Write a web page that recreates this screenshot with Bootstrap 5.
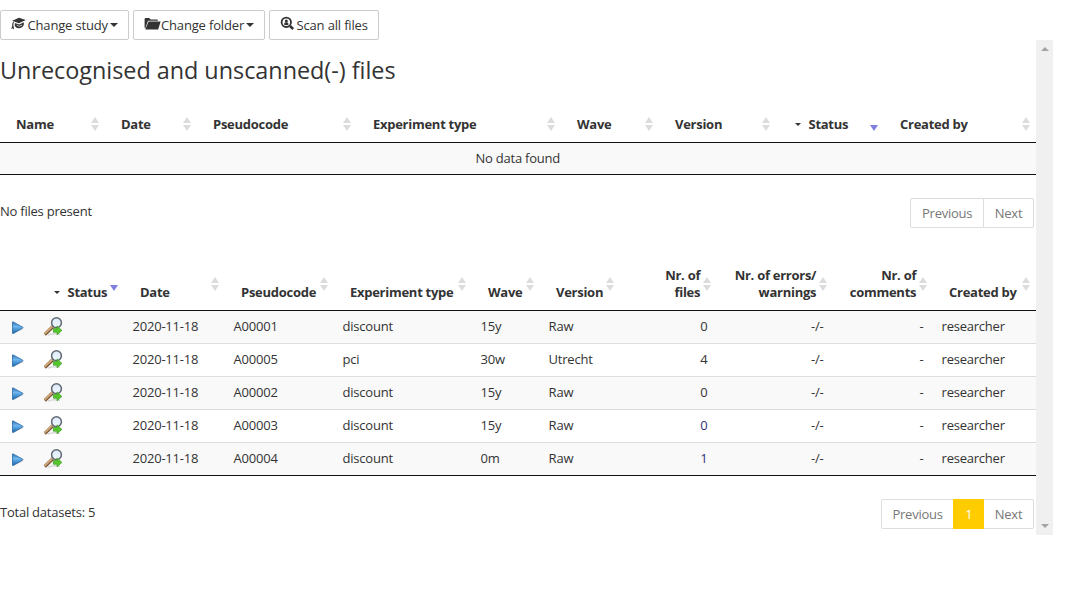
<!DOCTYPE html>
<html lang="en">
<head>
<meta charset="utf-8">
<title>Datasets</title>
<link href="https://cdn.jsdelivr.net/npm/bootstrap@5.3.0/dist/css/bootstrap.min.css" rel="stylesheet">
<style>
body{font:13px/17px "Open Sans",sans-serif;letter-spacing:-.23px;color:#333;background:#fff;overflow:hidden}
.toolbar{padding-top:10px;gap:4px;height:40px}
.tool{--bs-btn-color:#333;--bs-btn-border-color:#ccc;--bs-btn-hover-bg:#eee;border-radius:2px;font-size:13px;line-height:18px;height:30px;padding:0 10px;white-space:nowrap;letter-spacing:-.16px}
.tool svg{flex:none}
.tool .dropcaret{margin-left:2px}
.dropcaret{display:inline-block;flex:none;border:4px solid transparent;border-top-color:currentColor;border-bottom:0}
.pane{width:1053px;height:495px}
.pane-body{width:1036px}
h1{font-size:23.4px;font-weight:400;line-height:26px;margin:17px 0 23px;letter-spacing:-.02px}
.grid-table{table-layout:fixed;width:1036px;border-collapse:separate;border-spacing:0;border-bottom:1px solid #111}
.grid-table th{position:relative;vertical-align:bottom;padding:10px 16px 9px;border-bottom:1px solid #111;font-weight:700;white-space:nowrap;letter-spacing:-.27px}
.grid-table td{padding:7px 9px 7px 8.6px;height:33px;border-top:1px solid #ddd;white-space:nowrap}
.grid-table tbody tr:first-child td{border-top:0;height:31px}
.grid-table.datasets td{padding-top:6px;padding-bottom:8px}
.grid-table.datasets td.text-end{padding-right:9.6px}
.grid-table.datasets th.text-end{padding-right:16.8px}
.grid-table.datasets tbody tr:first-child td{height:32px}
.grid-table tbody tr:nth-child(odd) td{background:#f9f9f9}
.sort::before,.sort::after{content:"";position:absolute;right:6px;border:4px solid transparent}
.sort::before{bottom:19px;border-top:0;border-bottom:6px solid #dcdcdc}
.sort::after{bottom:11px;border-bottom:0;border-top:6px solid #dcdcdc}
.sort.active::before{display:none}
.sort.active::after{border-top-color:#7f7fe0}
.status-caret{border-width:3px;border-bottom:0;margin-right:7.5px;vertical-align:3px}
.datasets .sort::before{bottom:27px}
.datasets .sort::after{bottom:19px}
.datasets td svg{display:block;margin:-2px 0 -2px 1px}
.datasets td svg.play-icon{margin:2px 0 -2px 2px}
.pager{--bs-pagination-font-size:13px;--bs-pagination-color:#777;--bs-pagination-border-color:#ddd;--bs-pagination-padding-x:10.7px;--bs-pagination-padding-y:5px;--bs-pagination-border-radius:2px;--bs-pagination-active-bg:#fc0;--bs-pagination-active-border-color:#fc0;margin:0 2px 0 0}
.pager .page-link{line-height:18px;height:30px}
.scrollbar{width:17px;background:#f0f0f0;padding:7px 0}
.scrollbar span{border:4px solid transparent}
.arrow-up{border-top:0!important;border-bottom-color:#a3a3a3!important}
.arrow-down{border-bottom:0!important;border-top-color:#a3a3a3!important}
.grid-table .link-count{color:#337}
</style>
</head>
<body>
<svg width="0" height="0" class="position-absolute" aria-hidden="true">
<defs>
<linearGradient id="blue" x1="0" y1="0" x2="0" y2="1"><stop offset="0" stop-color="#2f72b5"/><stop offset=".4" stop-color="#6db7ee"/><stop offset="1" stop-color="#1667b1"/></linearGradient>
<linearGradient id="lens" x1="0" y1="0" x2="0" y2="1"><stop offset="0" stop-color="#dceafb"/><stop offset="1" stop-color="#f1f8ff"/></linearGradient>
</defs>
<symbol id="play" viewBox="0 0 12 14"><path d="M1.5 2.2v10.8l10.2-5.2z" fill="#999" opacity=".5"/><path d="M.5 1.2Q.5.6 1.1.9L10.6 6.1q.6.5 0 .9L1.1 12.5q-.6.3-.6-.4z" fill="url(#blue)" stroke="#2a68a5" stroke-width=".8"/></symbol>
<symbol id="scan" viewBox="0 0 19 19"><path d="M4 18.2q5-2.4 12-.8" stroke="#bbb" stroke-width="1.4" fill="none" opacity=".6"/><path d="M.7 17.6L8.8 9.8" stroke="#755434" stroke-width="3.4"/><path d="M.6 16.9L8.3 9.5" stroke="#d1a779" stroke-width="2"/><circle cx="12.5" cy="5.7" r="4.9" fill="url(#lens)" stroke="#606972" stroke-width="1.5"/><path d="M9.4 11.6h3.7V8.9l4.8 4.5-4.8 4.4v-2.6H9.4z" fill="#55c72d" stroke="#379c1e" stroke-width=".7"/></symbol>
</svg>

<div class="toolbar d-flex">
<button class="btn tool d-flex align-items-center" type="button" style="width:129px"><svg width="16" height="14" viewBox="0 0 16 14" fill="#333" style="margin:-2px .5px 0 0"><path d="M1.2 3.8L8 .7 14.8 3 7.9 6.3z"/><path d="M3.8 6v3q1.6 2.4 4.4 2.2Q11.6 11 12.8 7.8V5.2L8.2 7.6zm1.5 1.5 2.8 1.4 3.4-1.5q-1 2-3.3 2-1.9 0-2.9-1.9z" fill-rule="evenodd"/><path d="M2.3 4.3Q.8 7 1.3 8.7L.2 12l1.5-.7 1.4 1.1L2.5 8.8Q1.7 7.5 3 5z"/></svg>Change study<span class="dropcaret"></span></button>
<button class="btn tool d-flex align-items-center" type="button" style="width:132px"><svg width="17" height="14" viewBox="0 0 17 14" fill="#333" style="margin-top:-2px"><path d="M.6 11V2.2Q.6 1 1.8 1h3.4l1.5 1.4h6.1q1.2 0 1.2 1.4H4L1.4 11z"/><path d="M4.6 4.6h12L14.2 12.6H1.2z"/></svg>Change folder<span class="dropcaret"></span></button>
<button class="btn tool d-flex align-items-center" type="button" style="width:110px"><svg width="16" height="16" viewBox="0 0 16 16" style="margin:-3px .5px 0 0"><circle cx="6.3" cy="6.3" r="4.7" fill="none" stroke="#333" stroke-width="1.8"/><path d="M10 10l3.2 3" stroke="#333" stroke-width="2.5"/><circle cx="6.3" cy="5" r="1.5" fill="#333"/><path d="M4.3 7q2-1.5 4 0v1.9h-4z" fill="#333"/></svg>Scan all files</button>
</div>

<main class="pane d-flex">
<div class="pane-body">
<h1>Unrecognised and unscanned(-) files</h1>
<table class="grid-table">
<colgroup><col style="width:105px"><col style="width:92px"><col style="width:160px"><col style="width:204px"><col style="width:98px"><col style="width:117px"><col style="width:108px"><col style="width:152px"></colgroup>
<thead><tr><th class="sort">Name</th><th class="sort">Date</th><th class="sort">Pseudocode</th><th class="sort">Experiment type</th><th class="sort">Wave</th><th class="sort">Version</th><th class="sort active" style="padding-left:19px"><span class="dropcaret status-caret"></span>Status</th><th class="sort">Created by</th></tr></thead>
<tbody><tr><td colspan="8" class="text-center">No data found</td></tr></tbody>
</table>
<div class="d-flex justify-content-between" style="margin-top:23px"><div style="padding-top:5px">No files present</div>
<ul class="pagination pager"><li class="page-item"><a class="page-link" href="#">Previous</a></li><li class="page-item"><a class="page-link" href="#">Next</a></li></ul></div>

<table class="grid-table datasets" style="margin-top:29px">
<colgroup><col style="width:34px"><col style="width:90px"><col style="width:101px"><col style="width:109px"><col style="width:138px"><col style="width:68px"><col style="width:80px"><col style="width:97px"><col style="width:116px"><col style="width:100px"><col style="width:103px"></colgroup>
<thead><tr><th></th><th class="sort active text-end"><span class="dropcaret status-caret"></span>Status</th><th class="sort">Date</th><th class="sort">Pseudocode</th><th class="sort">Experiment type</th><th class="sort">Wave</th><th class="sort">Version</th><th class="sort text-end">Nr. of<br>files</th><th class="sort text-end">Nr. of errors/<br>warnings</th><th class="sort text-end">Nr. of<br>comments</th><th class="sort">Created by</th></tr></thead>
<tbody>
<tr><td><svg class="play-icon" width="14" height="14"><use href="#play"/></svg></td><td><svg width="19" height="19"><use href="#scan"/></svg></td><td>2020-11-18</td><td>A00001</td><td>discount</td><td>15y</td><td>Raw</td><td class="text-end">0</td><td class="text-end">-/-</td><td class="text-end">-</td><td>researcher</td></tr>
<tr><td><svg class="play-icon" width="14" height="14"><use href="#play"/></svg></td><td><svg width="19" height="19"><use href="#scan"/></svg></td><td>2020-11-18</td><td>A00005</td><td>pci</td><td>30w</td><td>Utrecht</td><td class="text-end">4</td><td class="text-end">-/-</td><td class="text-end">-</td><td>researcher</td></tr>
<tr><td><svg class="play-icon" width="14" height="14"><use href="#play"/></svg></td><td><svg width="19" height="19"><use href="#scan"/></svg></td><td>2020-11-18</td><td>A00002</td><td>discount</td><td>15y</td><td>Raw</td><td class="text-end">0</td><td class="text-end">-/-</td><td class="text-end">-</td><td>researcher</td></tr>
<tr><td><svg class="play-icon" width="14" height="14"><use href="#play"/></svg></td><td><svg width="19" height="19"><use href="#scan"/></svg></td><td>2020-11-18</td><td>A00003</td><td>discount</td><td>15y</td><td>Raw</td><td class="text-end link-count">0</td><td class="text-end">-/-</td><td class="text-end">-</td><td>researcher</td></tr>
<tr><td><svg class="play-icon" width="14" height="14"><use href="#play"/></svg></td><td><svg width="19" height="19"><use href="#scan"/></svg></td><td>2020-11-18</td><td>A00004</td><td>discount</td><td>0m</td><td>Raw</td><td class="text-end link-count">1</td><td class="text-end">-/-</td><td class="text-end">-</td><td>researcher</td></tr>
</tbody>
</table>
<div class="d-flex justify-content-between" style="margin-top:23px"><div style="padding-top:5px">Total datasets: 5</div>
<ul class="pagination pager"><li class="page-item"><a class="page-link" href="#">Previous</a></li><li class="page-item active"><a class="page-link" href="#">1</a></li><li class="page-item"><a class="page-link" href="#">Next</a></li></ul></div>
</div>
<div class="scrollbar d-flex flex-column justify-content-between align-items-center"><span class="arrow-up"></span><span class="arrow-down"></span></div>
</main>
<script src="https://cdn.jsdelivr.net/npm/bootstrap@5.3.0/dist/js/bootstrap.bundle.min.js"></script>
</body>
</html>
